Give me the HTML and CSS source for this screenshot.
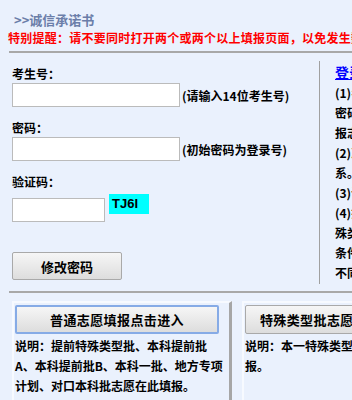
FILE: index.html
```html
<!DOCTYPE html>
<html lang="zh-CN">
<head>
  <meta charset="UTF-8" />
  <title>诚信承诺书</title>
  <link rel="stylesheet" href="styles.css">
</head>
<body>
<div class="page">

  <div class="title">&gt;&gt;诚信承诺书</div>
  <div class="notice">特别提醒：请不要同时打开两个或两个以上填报页面，以免发生数据错乱。</div>
  <hr class="rule">

  <div class="top">
    <form class="login" id="login">
      <div class="group">
        <label class="label">考生号：</label>
        <div class="row">
          <input class="text" name="ksh" />
          <span class="hint">(请输入14位考生号)</span>
        </div>
      </div>
      <div class="group">
        <label class="label">密码：</label>
        <div class="row">
          <input class="text" name="pwd" type="password" />
          <span class="hint">(初始密码为登录号)</span>
        </div>
      </div>
      <div class="group">
        <label class="label">验证码：</label>
        <div class="row captcha-row">
          <input class="text short" name="code" />
          <span class="captcha">TJ6I</span>
        </div>
      </div>
      <button type="button" class="btn btn-pwd">修改密码</button>
    </form>

    <div class="notes">
      <a href="#" class="notes-link">登录说明</a>
      <p>(1)考生号为14位报名号，初始<br>密码为登录号，请登录后及时修改<br>报志愿密码。</p>
      <p>(2)忘记密码请与所在县区招办联<br>系。</p>
      <p>(3)请认真阅读诚信承诺书。</p>
      <p>(4)提前特殊类型批考生须按特<br>殊类型招生要求填报，不符合报考<br>条件的考生志愿无效。<br>不同批次志愿请分别填报。</p>
    </div>
  </div>

  <hr class="rule">

  <div class="entries">
    <div class="entry">
      <button type="button" class="btn btn-enter active">普通志愿填报点击进入</button>
      <div class="desc">说明：提前特殊类型批、本科提前批A、本科提前批B、本科一批、地方专项计划、对口本科批志愿在此填报。</div>
    </div>
    <div class="entry">
      <button type="button" class="btn btn-enter">特殊类型批志愿填报点击进入</button>
      <div class="desc">说明：本一特殊类型批次志愿在此填报。</div>
    </div>
  </div>

</div>
</body>
</html>
```

FILE: styles.css
```css
body {
  margin: 0;
  background-color: #eaf1fd;
  font-family: "Noto Sans CJK SC", sans-serif;
  font-size: 12px;
  font-weight: bold;
  color: #000;
  overflow: hidden;
}
.page {
  width: 600px;
  padding: 11px 0 0 9px;
}
.title {
  padding-left: 5px;
  font-size: 13px;
  line-height: 18px;
  color: #6b7ea9;
}
.notice {
  font-size: 12px;
  line-height: 18px;
  color: #ff0000;
  white-space: nowrap;
  margin-left: -1px;
  letter-spacing: 0.25px;
}
.rule {
  border: 0;
  border-top: 2px solid #a8a8a8;
  margin: 4px 0 0 0;
  height: 0;
}

/* top: login form + notes */
.top {
  display: flex;
  margin-top: 8px;
  margin-bottom: 7px;
}
.login {
  width: 307px;
  padding: 5px 0 0 3px;
  border-right: 1px solid #a0a0a0;
  height: 218px;
}
.group {
  margin-bottom: 13px;
}
.label {
  display: block;
  line-height: 16px;
  margin-bottom: 1px;
}
.row {
  display: flex;
  align-items: center;
}
.text {
  width: 168px;
  height: 24px;
  box-sizing: border-box;
  border: 1px solid #bbbbbb;
  background: #fff;
  padding: 2px 4px;
  margin: 0;
}
.text.short {
  width: 93px;
}
.hint {
  margin-left: 2px;
}
.captcha-row {
  align-items: flex-start;
  padding-top: 3px;
}
.captcha-row .text {
  margin-top: 4px;
}
.captcha {
  margin-left: 4px;
  width: 40px;
  height: 20px;
  box-sizing: border-box;
  padding-left: 3px;
  background: #00ffff;
  font-family: "Liberation Sans", Arial, sans-serif;
  font-size: 13px;
  line-height: 20px;
}
.btn {
  font-family: "Noto Sans CJK SC", sans-serif;
  font-weight: bold;
  color: #000;
  border: 1px solid #a9a9a9;
  border-radius: 2px;
  background: linear-gradient(#f6f6f6, #dddddd);
  cursor: pointer;
  padding: 0;
}
.btn-pwd {
  width: 110px;
  height: 28px;
  font-size: 13px;
  margin-top: 17px;
}

.notes {
  padding-left: 15px;
  white-space: nowrap;
  line-height: 20px;
}
.notes-link {
  display: block;
  font-size: 14px;
  line-height: 22px;
  color: #0000ff;
}
.notes p {
  margin: 0;
}

/* bottom entries */
.entries {
  display: flex;
  gap: 10px;
  margin: 8px 0 0 3px;
}
.entry {
  width: 209px;
  height: 120px;
  padding: 2px 5px 0 1px;
  border-left: 2px solid #f7faff;
  border-top: 2px solid #f7faff;
  border-right: 3px solid #a6a6a6;
}
.btn-enter {
  width: 204px;
  height: 29px;
  font-size: 13px;
  letter-spacing: 0.4px;
}
.btn-enter.active {
  border: 2px solid #86abe6;
}
.desc {
  margin-top: 2px;
  line-height: 20px;
}
```
